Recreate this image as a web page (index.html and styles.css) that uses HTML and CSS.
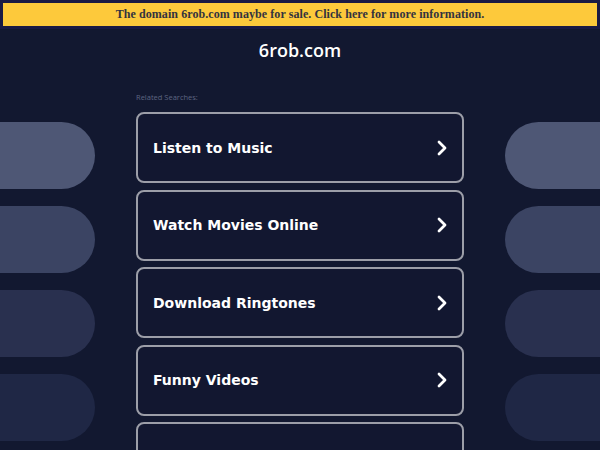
FILE: index.html
```html
<!DOCTYPE html>
<html lang="en">
<head>
<meta charset="utf-8">
<title>6rob.com</title>
<link rel="stylesheet" href="styles.css">
</head>
<body>
<div class="topbar">
  <a class="banner" href="#">The domain 6rob.com maybe for sale. Click here for more information.</a>
</div>
<h1 class="title">6rob.com</h1>
<div class="main">
  <div class="side side-left">
    <div class="pill p1"></div>
    <div class="pill p2"></div>
    <div class="pill p3"></div>
    <div class="pill p4"></div>
  </div>
  <div class="center">
    <div class="label">Related Searches:</div>
    <div class="cards">
      <a class="card" href="#"><span>Listen to Music</span><svg class="chev" width="10" height="16" viewBox="0 0 10 16"><polyline points="2,2 8,8 2,14" fill="none" stroke="#fff" stroke-width="2.8" stroke-linecap="round" stroke-linejoin="round"/></svg></a>
      <a class="card" href="#"><span>Watch Movies Online</span><svg class="chev" width="10" height="16" viewBox="0 0 10 16"><polyline points="2,2 8,8 2,14" fill="none" stroke="#fff" stroke-width="2.8" stroke-linecap="round" stroke-linejoin="round"/></svg></a>
      <a class="card" href="#"><span>Download Ringtones</span><svg class="chev" width="10" height="16" viewBox="0 0 10 16"><polyline points="2,2 8,8 2,14" fill="none" stroke="#fff" stroke-width="2.8" stroke-linecap="round" stroke-linejoin="round"/></svg></a>
      <a class="card" href="#"><span>Funny Videos</span><svg class="chev" width="10" height="16" viewBox="0 0 10 16"><polyline points="2,2 8,8 2,14" fill="none" stroke="#fff" stroke-width="2.8" stroke-linecap="round" stroke-linejoin="round"/></svg></a>
      <a class="card" href="#"><span>Online Games</span><svg class="chev" width="10" height="16" viewBox="0 0 10 16"><polyline points="2,2 8,8 2,14" fill="none" stroke="#fff" stroke-width="2.8" stroke-linecap="round" stroke-linejoin="round"/></svg></a>
    </div>
  </div>
  <div class="side side-right">
    <div class="pill p1"></div>
    <div class="pill p2"></div>
    <div class="pill p3"></div>
    <div class="pill p4"></div>
  </div>
</div>
</body>
</html>
```
FILE: styles.css
```css
html, body {
  margin: 0;
  padding: 0;
  background: #121830;
}
body {
  font-family: "DejaVu Sans", sans-serif;
  color: #fff;
}
.topbar {
  background: #1a1a44;
  padding: 3px 3px 3px 3px;
}
.banner {
  display: block;
  height: 23px;
  line-height: 23px;
  background: #fdc93b;
  color: #33333f;
  text-align: center;
  text-decoration: none;
  font-family: "Liberation Serif", serif;
  font-weight: bold;
  font-size: 12px;
  letter-spacing: 0.07px;
}
.title {
  margin: 9px 0 0 0;
  text-align: center;
  font-family: "Open Sans", sans-serif;
  font-weight: 600;
  font-size: 18px;
  line-height: 24px;
  color: #fff;
}
.main {
  display: grid;
  grid-template-columns: 1fr 328px 1fr;
  margin-top: 30px;
}
.side {
  display: flex;
  flex-direction: column;
  gap: 17px;
  padding-top: 30px;
}
.side-left {
  padding-right: 41px;
}
.side-right {
  padding-left: 41px;
}
.pill {
  height: 67px;
}
.side-left .pill {
  border-radius: 0 34px 34px 0;
}
.side-right .pill {
  border-radius: 34px 0 0 34px;
}
.p1 { background: #4e5775; }
.p2 { background: #3b4463; }
.p3 { background: #29304f; }
.p4 { background: #1f2745; }
.label {
  font-family: "Open Sans", sans-serif;
  font-size: 7.5px;
  line-height: 10px;
  color: #5d6480;
  margin-bottom: 10px;
}
.cards {
  display: flex;
  flex-direction: column;
  gap: 6.5px;
}
.card {
  box-sizing: border-box;
  height: 71px;
  border: 2px solid #9c9ea8;
  border-radius: 8px;
  background: #121730;
  display: flex;
  align-items: center;
  justify-content: space-between;
  padding: 0 15px;
  color: #fff;
  text-decoration: none;
  font-family: "DejaVu Sans", sans-serif;
  font-weight: bold;
  font-size: 14px;
}
.chev {
  display: block;
}
```
